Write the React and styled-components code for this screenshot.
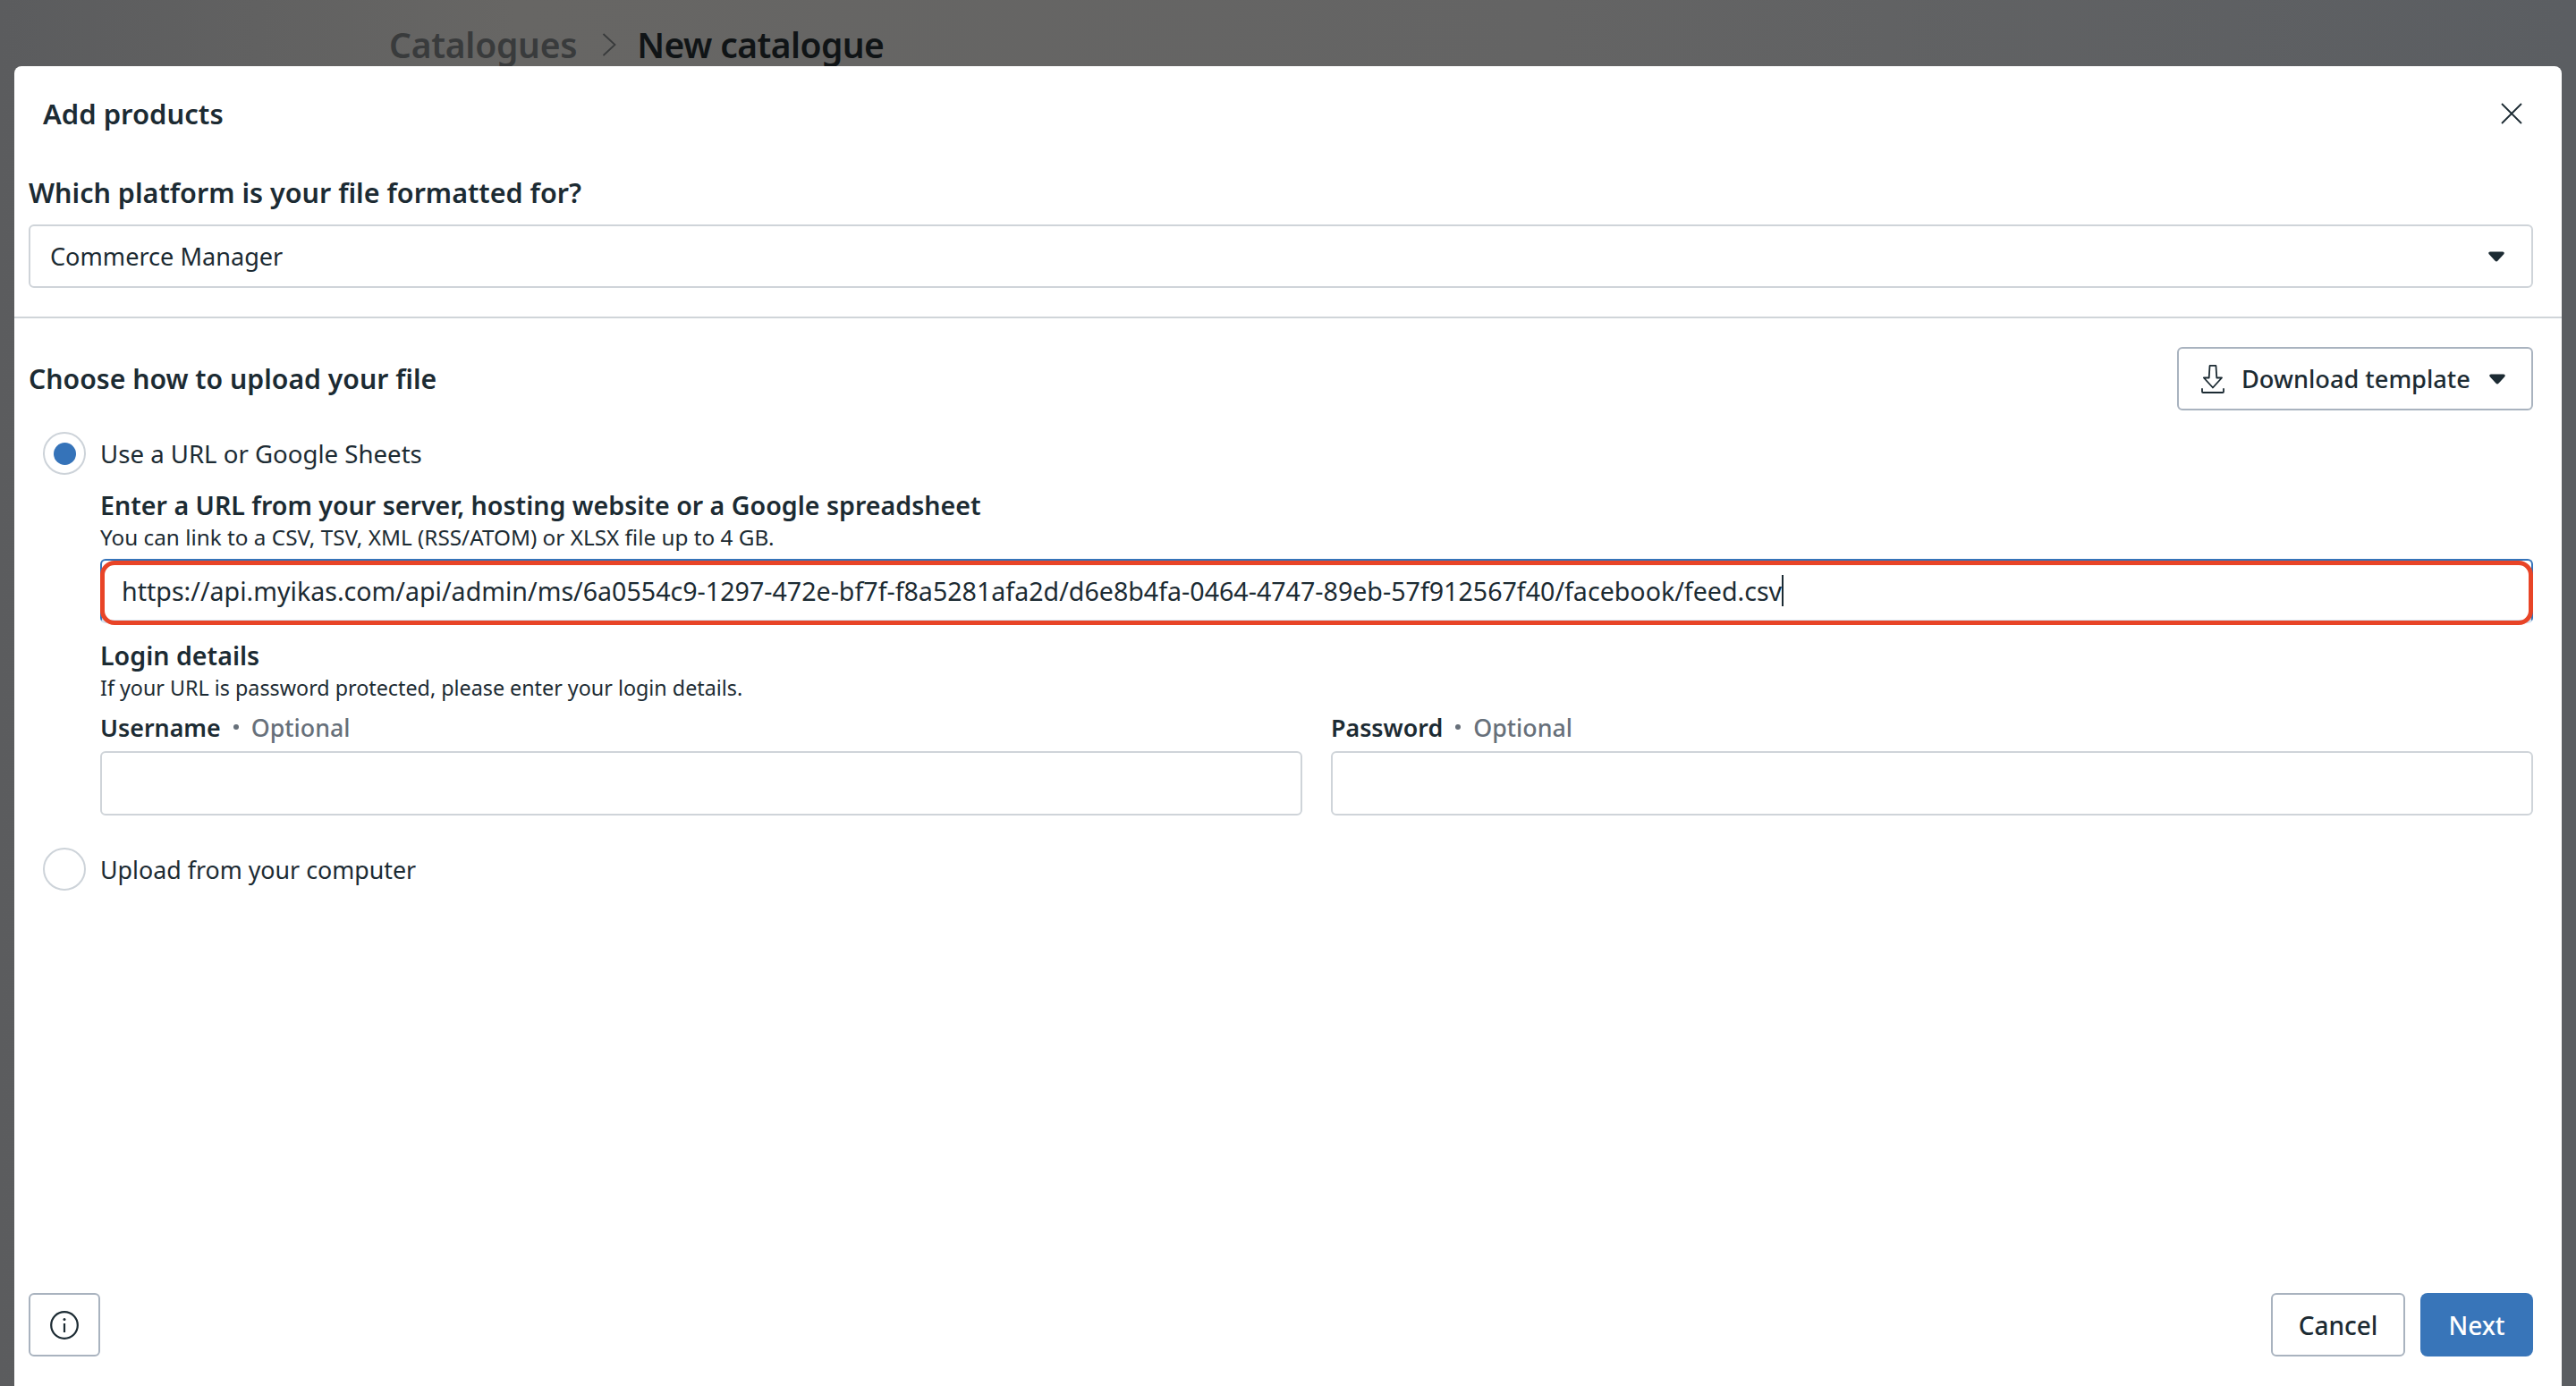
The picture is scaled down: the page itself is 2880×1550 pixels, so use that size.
import React from "react";
import styled, { createGlobalStyle } from "styled-components";

const Global = createGlobalStyle`
  html, body { margin: 0; padding: 0; width: 2880px; height: 1550px; overflow: hidden; }
  * { box-sizing: border-box; }
  body { font-family: "Noto Sans", "Open Sans", sans-serif; color: #1c2b33; }
  svg { flex: none; }
`;

const Page = styled.div`
  width: 2880px;
  height: 1550px;
  display: flex;
  flex-direction: column;
  overflow: hidden;
  background: linear-gradient(90deg, #5b5c5e 0%, #676664 20%, #646464 60%, #5b5e62 100%);
`;
const Crumbs = styled.div`
  height: 74px;
  flex: none;
  padding: 27px 0 0 435px;
  display: flex;
  align-items: flex-start;
  font-size: 39px;
  font-weight: 600;
  letter-spacing: -0.3px;
  line-height: 46px;
`;
const Crumb = styled.span`
  color: ${(p) => (p.$current ? "#101416" : "#393b3c")};
  letter-spacing: ${(p) => (p.$current ? "-0.6px" : "-0.25px")};
`;
const CrumbChevron = styled.svg`
  margin: 10px 23px 0 28px;
`;
const Modal = styled.div`
  flex: 1;
  margin: 0 16px;
  background: #fff;
  border-radius: 8px 8px 0 0;
  display: flex;
  flex-direction: column;
  min-height: 0;
`;
const Header = styled.div`
  height: 106px;
  flex: none;
  padding: 0 44px 0 32px;
  display: flex;
  align-items: center;
  justify-content: space-between;
`;
const Title = styled.h1`
  margin: 0;
  font-size: 31px;
  font-weight: 600;
  line-height: 106px;
`;
const PlatformSection = styled.div`
  flex: none;
  height: 176px;
  padding: 15px 32px 0 16px;
  border-bottom: 2px solid #d0d5d9;
`;
const Heading = styled.h2`
  margin: 0;
  font-size: ${(p) => p.$size}px;
  font-weight: 600;
  line-height: 40px;
`;
const Field = styled.div`
  height: ${(p) => p.$h || 71}px;
  background: #fff;
  border: 2px solid #cfd4d9;
  border-radius: 6px;
  display: flex;
  align-items: center;
  justify-content: space-between;
  padding: 0 30px 0 22px;
  font-size: 27.1px;
`;
const PlatformField = styled(Field)`
  margin-top: 16px;
`;
const UploadSection = styled.div`
  flex: 1;
  display: flex;
  flex-direction: column;
  padding: 32px 32px 0 16px;
  min-height: 0;
`;
const UploadHead = styled.div`
  display: flex;
  align-items: center;
  justify-content: space-between;
  height: 71px;
  flex: none;
`;
const OutlineButton = styled.div`
  height: 71px;
  width: ${(p) => p.$w}px;
  flex: none;
  background: #fff;
  border: 2px solid #a9b3bf;
  border-radius: 6px;
  display: flex;
  align-items: center;
  justify-content: center;
  font-size: 28px;
  font-weight: 500;
  color: #1c2b33;
  white-space: nowrap;
`;
const DownloadButton = styled(OutlineButton)`
  justify-content: flex-start;
  padding: 0 29px 0 25px;
  font-size: 27.2px;
`;
const DownloadLabel = styled.span`
  margin: 0 auto 0 19px;
`;
const Spacer = styled.span`
  flex: 1;
`;
const RadioRow = styled.div`
  display: flex;
  align-items: center;
  gap: 16px;
  height: 48px;
  flex: none;
  margin-top: ${(p) => p.$mt}px;
  padding-left: 16px;
  font-size: ${(p) => p.$size}px;
`;
const Radio = styled.span`
  width: 48px;
  height: 48px;
  flex: none;
  border-radius: 50%;
  background: #fff;
  border: 2px solid #cdd3d9;
  display: flex;
  align-items: center;
  justify-content: center;
  &::after {
    content: "";
    display: ${(p) => (p.$on ? "block" : "none")};
    width: 25px;
    height: 25px;
    border-radius: 50%;
    background: #3573b9;
  }
`;
const Indented = styled.div`
  padding-left: 80px;
  flex: none;
`;
const SubHeading = styled.div`
  font-size: 28.6px;
  font-weight: 600;
  line-height: 38px;
  margin-top: ${(p) => p.$mt || 0}px;
`;
const Help = styled.div`
  font-size: ${(p) => p.$size}px;
  line-height: 30px;
  margin-top: 2px;
`;
const UrlField = styled.div`
  position: relative;
  height: 72px;
  margin-top: 9px;
  border: 2px solid #3573b9;
  border-bottom-width: 4px;
  border-bottom-color: #d5e3f1;
  border-radius: 6px;
  display: flex;
  align-items: center;
  padding: 0 22px;
  font-size: 28.6px;
  white-space: nowrap;
`;
const Annotation = styled.div`
  position: absolute;
  inset: 0 -2px -6px -2px;
  border: 5px solid #e84427;
  border-radius: 16px;
  pointer-events: none;
`;
const Caret = styled.span`
  display: inline-block;
  width: 1.5px;
  height: 35px;
  background: #1c2b33;
  flex: none;
`;
const LoginGrid = styled.div`
  display: grid;
  grid-template-columns: 1fr 1fr;
  column-gap: 32px;
  margin-top: 7px;
`;
const Label = styled.div`
  height: 44px;
  display: flex;
  align-items: center;
  gap: 14px;
  font-size: 26.8px;
  font-weight: 600;
  margin-bottom: 5px;
`;
const Optional = styled.span`
  color: #67707a;
  font-weight: 500;
`;
const Dot = styled.span`
  width: 6px;
  height: 6px;
  border-radius: 50%;
  background: #67707a;
`;
const Footer = styled.div`
  margin-top: auto;
  height: 104px;
  flex: none;
  display: flex;
  align-items: flex-start;
  gap: 17px;
`;
const NextButton = styled.div`
  width: 126px;
  height: 71px;
  border-radius: 8px;
  background: #3875b9;
  color: #fff;
  display: flex;
  align-items: center;
  justify-content: center;
  font-size: 28px;
  font-weight: 500;
`;

const CaretIcon = () => (
  <svg width="18" height="12" viewBox="0 0 18 12">
    <path d="M2 0.5h14c1.600 0 2.300 1.600 1.300 2.700l-6.900 7.600c-.8.900-2 .9-2.800 0L.7 3.200C-.3 2.100.4.500 2 .5z" fill="#1c2b33" />
  </svg>
);
const CloseIcon = () => (
  <svg width="24" height="24" viewBox="0 0 24 24" fill="none" stroke="#1c2b33" strokeWidth="1.800">
    <path d="M1 1l22 22M23 1L1 23" />
  </svg>
);
const DownloadIcon = () => (
  <svg width="26" height="32" viewBox="0 0 26 32" fill="none" stroke="#1c2b33" strokeWidth="1.800" strokeLinejoin="round" strokeLinecap="round">
    <path d="M9.500 1.500c0-.5.400-.7.800-.7h5.400c.4 0 .8.200.8.700l.8 13h5.700L13 25.500 2.900 14.500h5.800z" />
    <path d="M1 27v3c0 .6.400 1 1 1h22c.6 0 1-.4 1-1v-3" />
  </svg>
);
const InfoIcon = () => (
  <svg width="32" height="32" viewBox="0 0 32 32" fill="none" stroke="#1c2b33" strokeWidth="2.200">
    <circle cx="16" cy="16" r="14.800" />
    <path d="M16 14v10" />
    <circle cx="16" cy="9.500" r="1.500" fill="#1c2b33" stroke="none" />
  </svg>
);

const URL_TEXT =
  "https://api.myikas.com/api/admin/ms/6a0554c9-1297-472e-bf7f-f8a5281afa2d/d6e8b4fa-0464-4747-89eb-57f912567f40/facebook/feed.csv";

export default function App() {
  return (
    <Page>
      <Global />
      <Crumbs>
        <Crumb>Catalogues</Crumb>
        <CrumbChevron width="16" height="26" viewBox="0 0 16 26" fill="none" stroke="#393b3c" strokeWidth="1.800">
          <path d="M1.500 1l13 12-13 12" />
        </CrumbChevron>
        <Crumb $current>New catalogue</Crumb>
      </Crumbs>
      <Modal>
        <Header>
          <Title>Add products</Title>
          <CloseIcon />
        </Header>
        <PlatformSection>
          <Heading $size={30.5}>Which platform is your file formatted for?</Heading>
          <PlatformField>
            <span>Commerce Manager</span>
            <CaretIcon />
          </PlatformField>
        </PlatformSection>
        <UploadSection>
          <UploadHead>
            <Heading $size={30.2}>Choose how to upload your file</Heading>
            <DownloadButton $w={398}>
              <DownloadIcon />
              <DownloadLabel>Download template</DownloadLabel>
              <CaretIcon />
            </DownloadButton>
          </UploadHead>
          <RadioRow $mt={24} $size={27.6}>
            <Radio $on />
            <span>Use a URL or Google Sheets</span>
          </RadioRow>
          <Indented>
            <SubHeading $mt={15}>Enter a URL from your server, hosting website or a Google spreadsheet</SubHeading>
            <Help $size={24.3}>You can link to a CSV, TSV, XML (RSS/ATOM) or XLSX file up to 4 GB.</Help>
            <UrlField>
              <span>{URL_TEXT}</span>
              <Caret />
              <Annotation />
            </UrlField>
            <SubHeading $mt={17}>Login details</SubHeading>
            <Help $size={23.3}>If your URL is password protected, please enter your login details.</Help>
            <LoginGrid>
              <div>
                <Label>
                  <span>Username</span>
                  <Dot />
                  <Optional>Optional</Optional>
                </Label>
                <Field $h={72} />
              </div>
              <div>
                <Label>
                  <span>Password</span>
                  <Dot />
                  <Optional>Optional</Optional>
                </Label>
                <Field $h={72} />
              </div>
            </LoginGrid>
          </Indented>
          <RadioRow $mt={36} $size={26.8}>
            <Radio />
            <span>Upload from your computer</span>
          </RadioRow>
          <Footer>
            <OutlineButton $w={80}>
              <InfoIcon />
            </OutlineButton>
            <Spacer />
            <OutlineButton $w={150}>Cancel</OutlineButton>
            <NextButton>Next</NextButton>
          </Footer>
        </UploadSection>
      </Modal>
    </Page>
  );
}
